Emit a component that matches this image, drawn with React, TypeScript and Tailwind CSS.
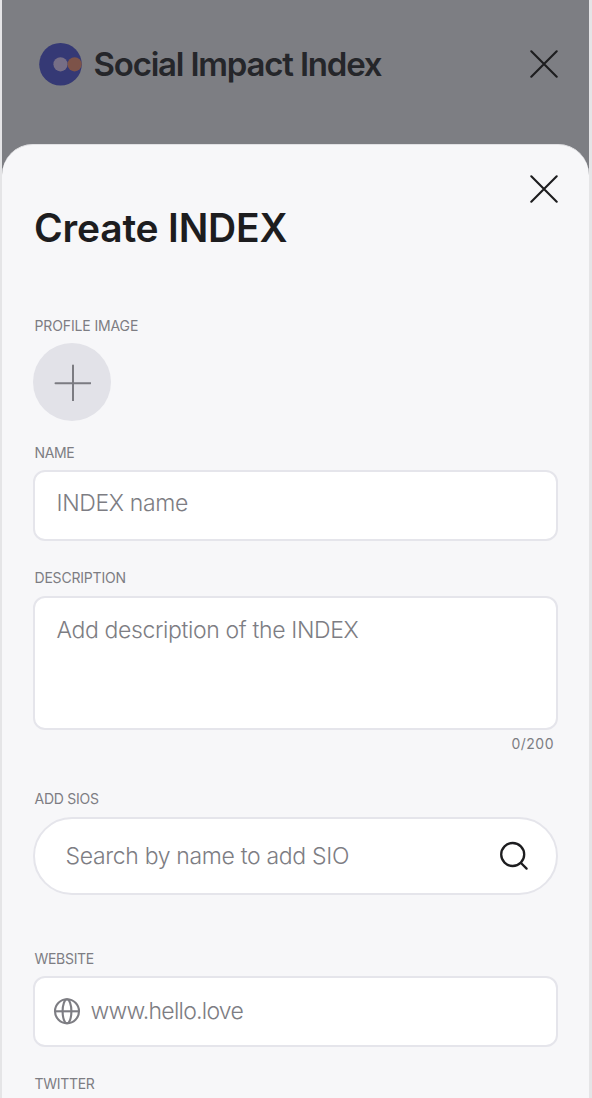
import React from "react";

function CloseIcon() {
  return (
    <svg width="28" height="28" viewBox="0 0 28 28" fill="none" stroke="#1d1d1f" strokeWidth="2.1" strokeLinecap="round">
      <path d="M1.3 1.3 26.7 26.7M26.7 1.3 1.3 26.7" />
    </svg>
  );
}

function Logo() {
  return (
    <svg className="shrink-0" width="43" height="43" viewBox="0 0 43 43">
      <circle cx="21.5" cy="21.3" r="21.3" fill="#353975" />
      <circle cx="21.5" cy="21.3" r="7.1" fill="#766e86" />
      <circle cx="35.6" cy="21.3" r="7.1" fill="#7d5349" />
    </svg>
  );
}

function Label({ children, className }: { children: React.ReactNode; className: string }) {
  return (
    <div className={`ml-[1.5px] h-5 whitespace-nowrap text-[14px] leading-5 text-[#7d7d83] ${className}`}>
      <span>{children}</span>
    </div>
  );
}

export default function App() {
  return (
    <div className="flex h-[1098px] w-[592px] flex-col overflow-hidden border-r-3 border-l-2 border-[#e5e5e7] bg-[#7d7e83] font-['Inter',sans-serif]">
      <header className="flex h-36 shrink-0 items-start justify-between pr-[31px] pl-[37px] pt-[43px]">
        <div className="flex items-center">
          <Logo />
          <span className="ml-[11.5px] whitespace-nowrap text-[33px] leading-[43px] font-semibold tracking-[-1.2px] text-[#25262a]">
            Social Impact Index
          </span>
        </div>
        <button className="mt-[7px]" aria-label="Close menu"><CloseIcon /></button>
      </header>

      <main className="flex grow flex-col rounded-t-[31px] border-t border-[#e1e1e4] bg-[#f7f7f9] pr-[31px] pl-[31px]">
        <button className="mt-[30px] self-end" aria-label="Close"><CloseIcon /></button>
        <h1 className="ml-px mt-px h-12 whitespace-nowrap text-[39px] leading-[48px] font-semibold tracking-[-0.2px] text-[#1d1d1f]">
          <span>Create INDEX</span>
        </h1>

        <Label className="mt-16 tracking-[-0.13px]">PROFILE IMAGE</Label>
        <button className="mt-[7px] flex size-[78px] shrink-0 items-center justify-center rounded-full bg-[#e2e2e8]" aria-label="Add image">
          <svg width="38" height="38" viewBox="0 0 38 38" fill="none" stroke="#7b7b81" strokeWidth="2" strokeLinecap="round">
            <path d="M20 2.5v35M2.5 20.2h35" />
          </svg>
        </button>

        <Label className="mt-[22px] tracking-[-0.4px]">NAME</Label>
        <div className="mt-[7px] flex h-[71px] w-[525px] shrink-0 items-center rounded-xl border-2 border-[#e5e5eb] bg-white pb-1.5 pl-[21.5px]">
          <span className="whitespace-nowrap text-[23px] leading-7 font-light tracking-[-0.35px] text-[#7d7d83]">INDEX name</span>
        </div>

        <Label className="mt-[27px] tracking-[-0.2px]">DESCRIPTION</Label>
        <div className="mt-2 h-[134px] w-[525px] shrink-0 rounded-xl border-2 border-[#e5e5eb] bg-white pt-[18px] pl-[21.5px]">
          <span className="whitespace-nowrap text-[23px] leading-7 font-light tracking-[-0.37px] text-[#7d7d83]">Add description of the INDEX</span>
        </div>
        <div className="mt-1 mr-1 h-5 text-right text-[14px] leading-5 tracking-[0.5px] text-[#7d7d83]"><span>0/200</span></div>

        <Label className="mt-[35px] tracking-[-0.25px]">ADD SIOS</Label>
        <div className="mt-2 flex h-[78px] w-[525px] shrink-0 items-center justify-between rounded-full border-2 border-[#e5e5eb] bg-white pr-[27px] pl-[30.5px]">
          <span className="whitespace-nowrap text-[23px] leading-7 font-light tracking-[-0.33px] text-[#7d7d83]">Search by name to add SIO</span>
          <svg width="30" height="30" viewBox="0 0 30 30" fill="none" stroke="#1d1d1f" strokeWidth="2.3" strokeLinecap="round">
            <circle cx="13.7" cy="13.5" r="11.5" />
            <path d="m22 22 5.6 5.6" />
          </svg>
        </div>

        <Label className="mt-[54px] tracking-[-0.3px]">WEBSITE</Label>
        <div className="mt-[7px] flex h-[71px] w-[525px] shrink-0 items-center rounded-xl border-2 border-[#e5e5eb] bg-white pb-0.5 pl-[17.5px]">
          <svg className="shrink-0" width="28" height="28" viewBox="0 0 28 28" fill="none" stroke="#7d7d83" strokeWidth="2.1">
            <circle cx="14" cy="14.3" r="12" />
            <ellipse cx="14" cy="14.3" rx="4.4" ry="12" />
            <path d="M2 14.3h24" />
          </svg>
          <span className="ml-[10px] whitespace-nowrap text-[23px] leading-7 font-light tracking-[-0.75px] text-[#7d7d83]">www.hello.love</span>
        </div>

        <Label className="mt-[27px] tracking-[-0.3px]">TWITTER</Label>
      </main>
    </div>
  );
}
